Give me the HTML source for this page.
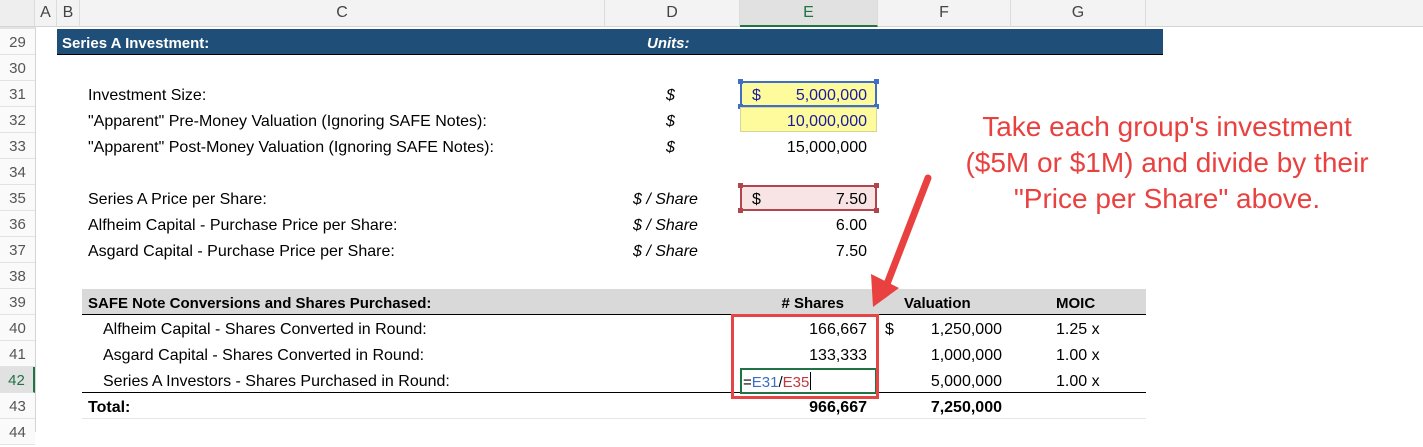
<!DOCTYPE html>
<html><head><meta charset="utf-8"><style>
*{margin:0;padding:0;box-sizing:border-box}
body{width:1423px;height:432px;overflow:hidden;background:#fff;font-family:"Liberation Sans",sans-serif;position:relative;color:#000}
.a{position:absolute;white-space:nowrap}
.hd{position:absolute;top:0;height:27px;background:#f3f3f3;border-bottom:1px solid #d4d4d4;border-right:1px solid #dcdcdc;color:#444;font-size:16px;text-align:center;line-height:26px}
.rn{position:absolute;left:0;width:35px;height:26px;color:#555;font-size:15px;text-align:center;line-height:28px;border-bottom:1px solid #e3e3e3;background:#fafafa}
.t{position:absolute;font-size:16px;line-height:26px;height:26px;padding-top:2px;white-space:nowrap}
.r{text-align:right}
b{font-weight:bold}
</style></head><body>
<div class="hd" style="left:0;width:35px;background:#eee"></div>
<div class="hd" style="left:35px;width:22px">A</div>
<div class="hd" style="left:57px;width:23px">B</div>
<div class="hd" style="left:80px;width:525px">C</div>
<div class="hd" style="left:605px;width:135px">D</div>
<div class="hd" style="left:740px;width:138px;background:#e1e1e1;border-bottom:2px solid #217346;color:#217346">E</div>
<div class="hd" style="left:878px;width:133px">F</div>
<div class="hd" style="left:1011px;width:135px">G</div>
<div class="hd" style="left:1146px;width:277px;border-right:none"></div>
<div class="a" style="left:35px;top:27px;width:1px;height:405px;background:#d4d4d4"></div>

<div class="rn" style="top:29px">29</div><div class="rn" style="top:55px">30</div><div class="rn" style="top:81px">31</div><div class="rn" style="top:107px">32</div><div class="rn" style="top:133px">33</div><div class="rn" style="top:159px">34</div><div class="rn" style="top:185px">35</div><div class="rn" style="top:211px">36</div><div class="rn" style="top:237px">37</div><div class="rn" style="top:263px">38</div><div class="rn" style="top:289px">39</div><div class="rn" style="top:315px">40</div><div class="rn" style="top:341px">41</div><div class="rn" style="top:367px;background:#e1e1e1;color:#217346;border-right:2px solid #217346">42</div><div class="rn" style="top:393px">43</div><div class="rn" style="top:419px">44</div>
<div class="a" style="left:0;top:27px;width:35px;height:2px;background:#e3e3e3"></div>

<div class="a" style="left:57px;top:29px;width:1106px;height:26px;background:#1f4e79;border-bottom:1px solid #000"></div>
<div class="t" style="left:62px;top:29px;color:#fff;font-weight:bold;font-size:15px">Series A Investment:</div>
<div class="t" style="left:647px;top:29px;color:#fff;font-weight:bold;font-style:italic;font-size:15px">Units:</div>

<div class="t" style="left:88px;top:81px">Investment Size:</div>
<div class="t" style="left:88px;top:107px">"Apparent" Pre-Money Valuation (Ignoring SAFE Notes):</div>
<div class="t" style="left:88px;top:133px">"Apparent" Post-Money Valuation (Ignoring SAFE Notes):</div>
<div class="t" style="left:666px;top:81px;font-style:italic">$</div>
<div class="t" style="left:666px;top:107px;font-style:italic">$</div>
<div class="t" style="left:666px;top:133px;font-style:italic">$</div>

<div class="a" style="left:740px;top:81px;width:137px;height:26px;background:#fdfb9c;border:2px solid #3f6fc4"></div>
<div class="a" style="left:738px;top:79px;width:5px;height:5px;background:#3f6fc4"></div><div class="a" style="left:874px;top:79px;width:5px;height:5px;background:#3f6fc4"></div><div class="a" style="left:738px;top:104px;width:5px;height:5px;background:#3f6fc4"></div><div class="a" style="left:874px;top:104px;width:5px;height:5px;background:#3f6fc4"></div>
<div class="t" style="left:752px;top:81px;color:#1a1aa0">$</div>
<div class="t r" style="left:740px;width:127px;top:81px;color:#1a1aa0">5,000,000</div>
<div class="a" style="left:740px;top:107px;width:137px;height:25px;background:#fdfb9c;border:1px solid #d6d49a"></div>
<div class="t r" style="left:740px;width:127px;top:107px;color:#1a1aa0">10,000,000</div>
<div class="t r" style="left:740px;width:127px;top:133px">15,000,000</div>

<div class="t" style="left:88px;top:185px">Series A Price per Share:</div>
<div class="t" style="left:88px;top:211px">Alfheim Capital - Purchase Price per Share:</div>
<div class="t" style="left:88px;top:237px">Asgard Capital - Purchase Price per Share:</div>
<div class="t" style="left:633px;top:185px;font-style:italic">$ / Share</div>
<div class="t" style="left:633px;top:211px;font-style:italic">$ / Share</div>
<div class="t" style="left:633px;top:237px;font-style:italic">$ / Share</div>
<div class="a" style="left:740px;top:185px;width:137px;height:26px;background:#f8e4e4;border:2px solid #b0454b"></div>
<div class="a" style="left:738px;top:183px;width:5px;height:5px;background:#b0454b"></div><div class="a" style="left:874px;top:183px;width:5px;height:5px;background:#b0454b"></div><div class="a" style="left:738px;top:208px;width:5px;height:5px;background:#b0454b"></div><div class="a" style="left:874px;top:208px;width:5px;height:5px;background:#b0454b"></div>
<div class="t" style="left:752px;top:185px">$</div>
<div class="t r" style="left:740px;width:127px;top:185px">7.50</div>
<div class="t r" style="left:740px;width:127px;top:211px">6.00</div>
<div class="t r" style="left:740px;width:127px;top:237px">7.50</div>

<div class="a" style="left:82px;top:289px;width:1064px;height:26px;background:#d9d9d9;border-bottom:1px solid #000"></div>
<div class="t" style="left:88px;top:289px;font-weight:bold;font-size:15px">SAFE Note Conversions and Shares Purchased:</div>
<div class="t r" style="left:740px;width:104px;top:289px;font-weight:bold;font-size:15px"># Shares</div>
<div class="t" style="left:904px;top:289px;font-weight:bold;font-size:15px">Valuation</div>
<div class="t" style="left:1056px;top:289px;font-weight:bold;font-size:15px">MOIC</div>

<div class="t" style="left:103px;top:315px">Alfheim Capital - Shares Converted in Round:</div>
<div class="t" style="left:103px;top:341px">Asgard Capital - Shares Converted in Round:</div>
<div class="t" style="left:103px;top:367px">Series A Investors - Shares Purchased in Round:</div>
<div class="t" style="left:88px;top:393px;font-weight:bold">Total:</div>
<div class="a" style="left:82px;top:392px;width:1064px;height:1px;background:#000"></div>
<div class="a" style="left:82px;top:418px;width:1064px;height:1px;background:#e6e6e6"></div>

<div class="t r" style="left:740px;width:127px;top:315px">166,667</div>
<div class="t r" style="left:740px;width:127px;top:341px">133,333</div>
<div class="t r" style="left:740px;width:127px;top:393px;font-weight:bold">966,667</div>
<div class="t" style="left:885px;top:315px">$</div>
<div class="t r" style="left:878px;width:124px;top:315px">1,250,000</div>
<div class="t r" style="left:878px;width:124px;top:341px">1,000,000</div>
<div class="t r" style="left:878px;width:124px;top:367px">5,000,000</div>
<div class="t r" style="left:878px;width:124px;top:393px;font-weight:bold">7,250,000</div>
<div class="t" style="left:1056px;top:315px">1.25 x</div>
<div class="t" style="left:1056px;top:341px">1.00 x</div>
<div class="t" style="left:1056px;top:367px">1.00 x</div>

<div class="a" style="left:740px;top:368px;width:137px;height:26px;background:#fff;border:2px solid #217346"></div>
<div class="t" style="left:743px;top:368px;font-size:15px">=<span style="color:#3a6fc4">E31</span>/<span style="color:#c0393f">E35</span><span style="display:inline-block;width:1px;height:18px;background:#000;vertical-align:-3px;margin-left:1px"></span></div>
<div class="a" style="left:731px;top:314px;width:148px;height:85px;border:3px solid #e64545"></div>

<div class="a" style="left:902px;top:109px;width:530px;text-align:center;color:#e8413f;font-size:28px;line-height:36px">Take each group's investment<br>($5M or $1M) and divide by their<br>"Price per Share" above.</div>
<svg class="a" style="left:0;top:0" width="1423" height="432">
<line x1="928" y1="178" x2="887" y2="284" stroke="#e8413f" stroke-width="7" stroke-linecap="round"/>
<polygon points="873,307 871,274 899,288" fill="#e8413f"/>
</svg>
</body></html>
